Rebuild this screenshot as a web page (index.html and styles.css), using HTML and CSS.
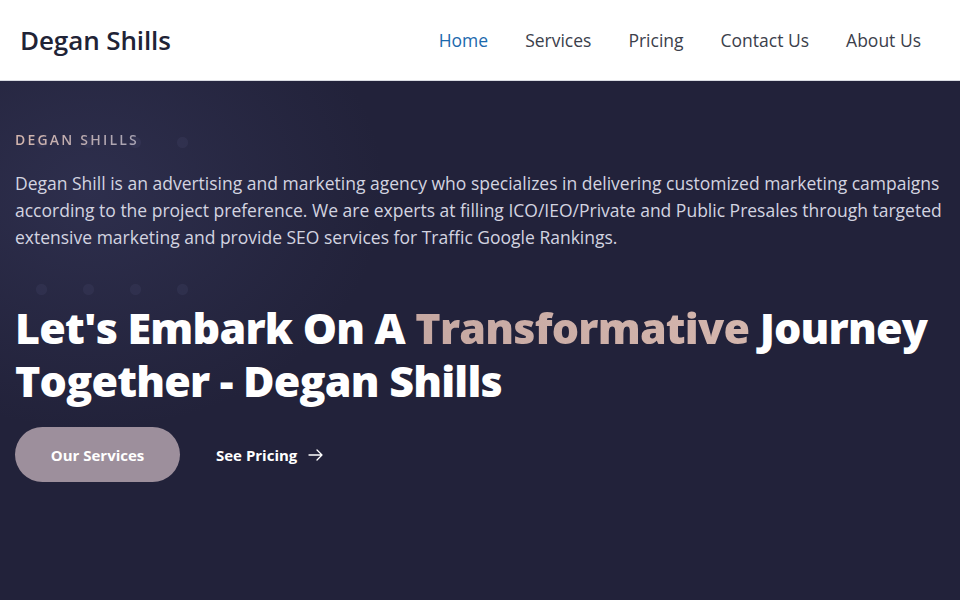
FILE: index.html
```html
<!DOCTYPE html>
<html lang="en">
<head>
<meta charset="utf-8">
<title>Degan Shills</title>
<link rel="stylesheet" href="styles.css">
</head>
<body>
<header class="topbar">
  <div class="logo">Degan Shills</div>
  <nav class="nav">
    <a class="nav-link active" href="#">Home</a>
    <a class="nav-link" href="#">Services</a>
    <a class="nav-link" href="#">Pricing</a>
    <a class="nav-link" href="#">Contact Us</a>
    <a class="nav-link" href="#">About Us</a>
  </nav>
</header>
<main class="hero">
  <div class="hero-dots" aria-hidden="true"></div>
  <div class="hero-inner">
    <p class="eyebrow">DEGAN SHILLS</p>
    <p class="intro">Degan Shill is an advertising and marketing agency who specializes in delivering customized marketing campaigns according to the project preference. We are experts at filling ICO/IEO/Private and Public Presales through targeted extensive marketing and provide SEO services for Traffic Google Rankings.</p>
    <h1 class="title">Let's Embark On A <span class="accent">Transformative</span> Journey<br>Together - Degan Shills</h1>
    <div class="actions">
      <a class="btn-primary" href="#">Our Services</a>
      <a class="btn-link" href="#">See Pricing
        <svg class="arrow" width="15" height="12" viewBox="0 0 15 12" fill="none" stroke="currentColor" stroke-width="1.3" stroke-linecap="round" stroke-linejoin="round"><path d="M1 6h13M9 1l5 5-5 5"/></svg>
      </a>
    </div>
  </div>
</main>
</body>
</html>
```
FILE: styles.css
```css
* { box-sizing: border-box; }
html, body { margin: 0; padding: 0; }
body {
  width: 960px;
  height: 600px;
  overflow: hidden;
  font-family: "Open Sans", "Noto Sans", sans-serif;
  background: #22223a;
}
.topbar {
  height: 81px;
  background: #ffffff;
  border-bottom: 1px solid #d9dbe2;
  display: flex;
  align-items: center;
  justify-content: space-between;
  padding: 0 39px 0 20px;
}
.logo {
  font-size: 26px;
  font-weight: 600;
  color: #1f2336;
  letter-spacing: -0.1px;
}
.nav {
  display: flex;
  gap: 37px;
}
.nav-link {
  font-size: 17.5px;
  color: #3b404b;
  text-decoration: none;
}
.nav-link.active { color: #1b69ad; }
.hero {
  position: relative;
  height: 519px;
  background:
    radial-gradient(ellipse 420px 340px at 90px 110px, rgba(60, 62, 100, 0.45), rgba(34, 34, 58, 0) 70%),
    #22223a;
  overflow: hidden;
}
.hero-dots {
  position: absolute;
  left: 18px;
  top: -12px;
  width: 190px;
  height: 300px;
  background-image: radial-gradient(circle, rgba(95, 97, 140, 0.35) 0 5px, transparent 6px);
  background-size: 47px 147px;
  opacity: 0.38;
}
.hero-inner {
  position: relative;
  padding: 47px 15px 0 15px;
}
.eyebrow {
  margin: 0;
  font-size: 14px;
  font-weight: 600;
  letter-spacing: 2.2px;
  background: linear-gradient(90deg, #d5b6ad, #a7a3b3);
  -webkit-background-clip: text;
  background-clip: text;
  color: transparent;
  display: inline-block;
}
.intro {
  margin: 20px 0 0 0;
  font-size: 17.5px;
  line-height: 27px;
  color: #d3d4e0;
}
.title {
  margin: 50px 0 0 0;
  font-size: 43px;
  line-height: 53px;
  font-weight: 800;
  letter-spacing: -0.8px;
  color: #ffffff;
}
.accent {
  background: linear-gradient(90deg, #c6a8a2, #d4b6ad);
  -webkit-background-clip: text;
  background-clip: text;
  color: transparent;
}
.actions {
  margin-top: 20px;
  display: flex;
  align-items: center;
  gap: 36px;
}
.btn-primary {
  width: 165px;
  height: 55px;
  border-radius: 28px;
  background: #9d8f9c;
  color: #ffffff;
  font-size: 15px;
  font-weight: 700;
  text-decoration: none;
  display: flex;
  align-items: center;
  justify-content: center;
}
.btn-link {
  color: #ffffff;
  font-size: 15px;
  font-weight: 700;
  text-decoration: none;
  display: flex;
  align-items: center;
  gap: 11px;
}
.arrow { display: block; }
```
